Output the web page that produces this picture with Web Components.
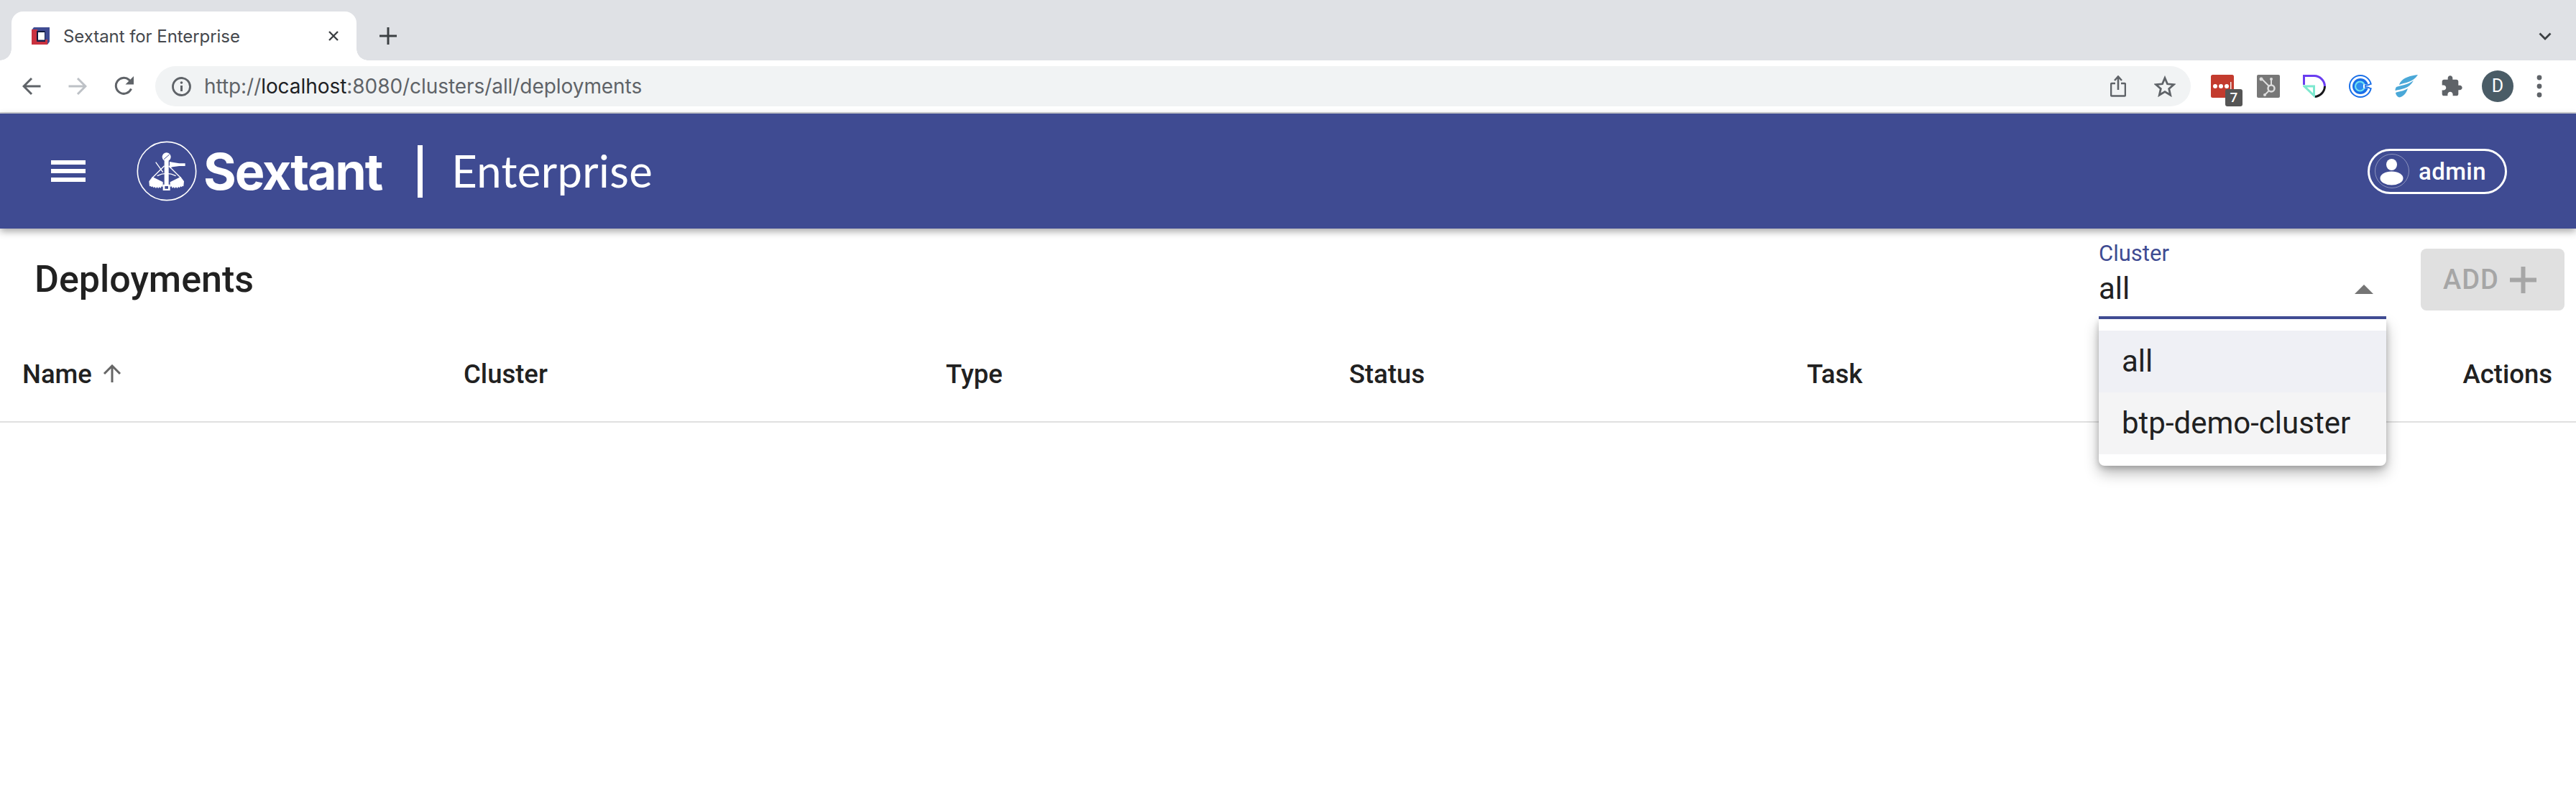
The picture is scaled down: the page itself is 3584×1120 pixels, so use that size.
<!DOCTYPE html>
<html lang="en">
<head>
<meta charset="utf-8">
<title>Sextant for Enterprise</title>
<style>
  html, body { margin: 0; padding: 0; background: #fff; }
  body { width: 3584px; height: 1120px; overflow: hidden; font-family: Roboto, "Liberation Sans", sans-serif; }
</style>
</head>
<body>
<browser-tabs></browser-tabs>
<browser-toolbar url-scheme="http://" url-host="localhost" url-rest=":8080/clusters/all/deployments"></browser-toolbar>
<app-header user="admin"></app-header>
<page-head title="Deployments"></page-head>
<deployments-table></deployments-table>

<script>
customElements.define('browser-tabs', class extends HTMLElement {
  constructor() {
    super();
    this.attachShadow({ mode: 'open' }).innerHTML = `
      <style>
        :host { display: flex; align-items: flex-end; height: 84px; background: #dfe1e5; padding-left: 16px; box-sizing: border-box; position: relative; }
        .tab { width: 480px; height: 68px; background: #fff; border-radius: 16px 16px 0 0; display: flex; align-items: center; box-sizing: border-box; padding-left: 28px; position: relative; }
        .tab::before, .tab::after { content: ""; position: absolute; bottom: 0; width: 16px; height: 16px; background: radial-gradient(circle at 0 0, #dfe1e5 15.5px, #fff 16px); }
        .tab::before { left: -16px; }
        .tab::after { right: -16px; background: radial-gradient(circle at 100% 0, #dfe1e5 15.5px, #fff 16px); }
        .title { margin-left: 19px; font: 400 24px Inter, Roboto, sans-serif; color: #45484d; white-space: nowrap; flex: 1; letter-spacing: -.06px; }
        .close { width: 16px; height: 16px; margin-right: 24px; }
        .plus { width: 24px; height: 24px; margin: 0 0 22px 32px; }
        .chevron { position: absolute; left: 3532px; top: 45px; width: 18px; height: 11px; }
      </style>
      <div class="tab">
        <svg width="25" height="26" viewBox="0 0 25 26">
          <path d="M3 1h22v20l-3 4H0V5z" fill="#3f4b92"/>
          <path d="M0 4h8v14h14v7H0z" fill="#c9313f"/>
          <path d="M7 6h12l-3 3H10v9l-3 3z" fill="#101a3c"/>
          <path d="M7 21l3-3h6V9l3-3v15z" fill="#141f4c"/>
          <rect x="9" y="8" width="9" height="10.500" fill="#fff"/>
        </svg>
        <span class="title">Sextant for Enterprise</span>
        <svg class="close" viewBox="0 0 16 16"><path d="M2 2l12 12M14 2L2 14" stroke="#3c4043" stroke-width="2.400" fill="none"/></svg>
      </div>
      <svg class="plus" viewBox="0 0 24 24"><path d="M12 0v24M0 12h24" stroke="#3c4043" stroke-width="3" fill="none"/></svg>
      <svg class="chevron" viewBox="0 0 18 11"><path d="M1.500 1.500L9 9l7.500-7.500" stroke="#3c4043" stroke-width="2.800" fill="none"/></svg>
    `;
  }
});

customElements.define('browser-toolbar', class extends HTMLElement {
  constructor() {
    super();
    this.attachShadow({ mode: 'open' }).innerHTML = `
      <style>
        :host { display: flex; align-items: center; height: 74px; box-sizing: border-box; border-bottom: 2px solid #d0d1d4; background: #fff; padding: 0 0 0 31px; position: relative; }
        svg { display: block; flex: none; }
        .nav { display: flex; gap: 38px; align-items: center; width: 185px; flex: none; }
        .omni { width: 2832px; height: 56px; background: #f1f3f4; border-radius: 28px; display: flex; align-items: center; box-sizing: border-box; padding: 0 21px 0 23px; flex: none; }
        .url { margin-left: 18px; font: 400 28px Inter, Roboto, sans-serif; letter-spacing: -.06px; color: #5f6368; flex: 1; white-space: nowrap; }
        .url b { font-weight: 400; color: #202124; }
        .omni-icons { display: flex; gap: 39px; align-items: center; }
        .ext { display: flex; align-items: center; margin-left: 28px; height: 72px; gap: 32px; }
        .ext > * { flex: none; }
        .lp { position: relative; width: 32px; height: 32px; }
        .badge { position: absolute; left: 20px; top: 20px; width: 24px; height: 24px; background: #555; border-radius: 3px; color: #fff; font: 500 19px/24px Roboto, sans-serif; text-align: center; }
        .avatar { width: 44px; height: 44px; border-radius: 50%; background: #4a5c66; color: #fff; font: 400 25px/44px Roboto, sans-serif; text-align: center; margin-left: 26px; flex: none; }
        .dots { margin-left: 32px; }
      </style>
      <div class="nav">
        <svg width="26" height="26" viewBox="0 0 26 26"><path d="M25.500 13H3M13 2L2 13l11 11" stroke="#5f6368" stroke-width="3" fill="none"/></svg>
        <svg width="26" height="26" viewBox="0 0 26 26"><path d="M.5 13H23M13 2l11 11-11 11" stroke="#bdc1c6" stroke-width="3" fill="none"/></svg>
        <svg width="28" height="28" viewBox="0 0 28 28"><path d="M23.500 17.500A11 11 0 1 1 20.500 5L24 8.500" stroke="#5f6368" stroke-width="3" fill="none"/><path d="M27 0v11.500H15.500z" fill="#5f6368"/></svg>
      </div>
      <div class="omni">
        <svg width="27" height="27" viewBox="0 0 27 27"><circle cx="13.500" cy="13.500" r="12" stroke="#5f6368" stroke-width="2.800" fill="none"/><path d="M13.500 12v8" stroke="#5f6368" stroke-width="3"/><circle cx="13.500" cy="8" r="1.800" fill="#5f6368"/></svg>
        <span class="url">${this.getAttribute('url-scheme')}<b>${this.getAttribute('url-host')}</b>${this.getAttribute('url-rest')}</span>
        <div class="omni-icons">
          <svg width="22" height="30" viewBox="0 0 22 30"><path d="M7 11H2.500a1.500 1.500 0 0 0-1.500 1.500V27a1.500 1.500 0 0 0 1.500 1.500h17A1.500 1.500 0 0 0 21 27V12.500A1.500 1.500 0 0 0 19.500 11H15M11 20V2M6 7l5-5.500L16 7" stroke="#5f6368" stroke-width="2.600" fill="none"/></svg>
          <svg width="30" height="30" viewBox="0 0 30 30"><path d="M15 3.500l3.500 8.300 9 .8-6.800 5.900 2 8.800-7.700-4.700-7.700 4.700 2-8.800-6.800-5.900 9-.8z" stroke="#5f6368" stroke-width="2.800" fill="none"/></svg>
        </div>
      </div>
      <div class="ext">
        <div class="lp">
          <svg width="32" height="32" viewBox="0 0 32 32"><rect width="32" height="32" rx="2.500" fill="#c33b2e"/><circle cx="6" cy="16" r="3" fill="#fff"/><circle cx="14" cy="16" r="3" fill="#fff"/><circle cx="22" cy="16" r="3" fill="#fff"/><rect x="27" y="10" width="1.500" height="12" fill="#eee"/></svg>
          <span class="badge">7</span>
        </div>
        <svg width="32" height="32" viewBox="0 0 32 32"><rect width="32" height="32" rx="2" fill="#777"/><g stroke="#ddd" fill="none" stroke-width="2"><circle cx="20" cy="19" r="4.500" stroke-width="2.500"/><path d="M7 6l10 10M20 7v7M16.500 22.500L11 28"/></g><circle cx="6" cy="6" r="2.500" fill="#ddd"/><circle cx="20" cy="6" r="2" fill="#ddd"/><circle cx="11" cy="28" r="2" fill="#ddd"/></svg>
        <svg width="32" height="32" viewBox="0 0 32 32"><path d="M1.500 14V1.500H15A15 15 0 0 1 30.500 16" stroke="#6a3df0" stroke-width="3" fill="none"/><path d="M30.500 16A15 15 0 0 1 16 30.500" stroke="#17171a" stroke-width="3" fill="none"/><path d="M2 16h13.500v13z" stroke="#7de8cf" stroke-width="3" fill="none"/></svg>
        <svg width="32" height="32" viewBox="0 0 32 32"><circle cx="16" cy="16" r="15" fill="none" stroke="#1a6fe8" stroke-width="2"/><circle cx="16" cy="16" r="11" fill="#1a6fe8"/><circle cx="15.500" cy="16" r="6.500" fill="#2d8df0" stroke="#6fe3f2" stroke-width="2.200"/><path d="M20 16h13" stroke="#fff" stroke-width="5"/><path d="M22 15c3 0 6-.5 9-2.500M22 17c3 0 6 .5 9 2.500" stroke="#1a6fe8" stroke-width="2" fill="none"/></svg>
        <svg width="32" height="32" viewBox="0 0 32 32"><g fill="#4aa8d8"><path d="M32 0C22 1 12 4 8 10c-1 1.500-2 3-2 4 7-3 19-3 26-14z"/><path d="M26 8C18 14 8 15 2 17c-1 1.500-1.500 3-1.500 5 8-2 19-2 25.500-14z"/><path d="M18 19C12 23 6 23 1 25c.5 3 2 5.500 5 6.500 6-1 10-6 12-12.500z"/></g></svg>
        <svg width="32" height="32" viewBox="0 0 24 24" style="margin-left:-1px"><path fill="#5f6368" d="M20.500 11H19V7c0-1.100-.9-2-2-2h-4V3.500C13 2.120 11.880 1 10.500 1S8 2.120 8 3.500V5H4c-1.100 0-1.990.9-1.990 2v3.800H3.500c1.490 0 2.700 1.210 2.700 2.700s-1.210 2.700-2.700 2.700H2V20c0 1.100.9 2 2 2h3.800v-1.500c0-1.490 1.210-2.700 2.700-2.700 1.490 0 2.700 1.210 2.700 2.700V22H17c1.100 0 2-.9 2-2v-4h1.500c1.380 0 2.500-1.120 2.500-2.500S21.880 11 20.500 11z"/></svg>
      </div>
      <span class="avatar">D</span>
      <svg class="dots" width="8" height="32" viewBox="0 0 8 32"><circle cx="4" cy="4" r="3.400" fill="#5f6368"/><circle cx="4" cy="16" r="3.400" fill="#5f6368"/><circle cx="4" cy="28" r="3.400" fill="#5f6368"/></svg>
    `;
  }
});

customElements.define('sextant-logo', class extends HTMLElement {
  constructor() {
    super();
    this.attachShadow({ mode: 'open' }).innerHTML = `
      <style>
        :host { display: flex; align-items: center; color: #fff; }
        svg { display: block; flex: none; }
        .word { font: 700 70px/1 Inter, Roboto, sans-serif; margin: 2px 0 0 9px; letter-spacing: -2.200px; }
        .sep { width: 7px; height: 73px; background: #fff; margin: 0 40px 0 50px; }
        .edition { font: 400 61.500px/1 Lato, Roboto, sans-serif; letter-spacing: .4px; }
      </style>
      <svg width="84" height="84" viewBox="60 76 252 252">
        <circle cx="186" cy="202" r="122" fill="none" stroke="#fff" stroke-width="5"/>
        <g fill="#fff">
          <circle cx="185" cy="143" r="18"/>
          <rect x="176" y="150" width="18" height="112"/>
          <path d="M170 258h30v25h-30zM178 265v11h14v-11z" fill-rule="evenodd"/>
          <path d="M198 163l12 2 28 5h25v11h-25l-28 4-12 4z"/>
          <path d="M112 245l14-19 44 22v20l-6-2-3 7-6-4-4 5-6-5-4 5-6-6-4 4-5-6-4 3-4-5-4 2z"/>
          <path d="M258 245l-14-19-44 22v20l6-2 3 7 6-4 4 5 6-5 4 5 6-6 4 4 5-6 4 3 4-5 4 2z"/>
        </g>
        <g fill="none" stroke="#fff" stroke-width="4">
          <path d="M140 165l30 42M176 180l-50 50M194 180l50 50"/>
          <path d="M146 222q39-20 78 0"/>
        </g>
        <path d="M174 153l23-20" stroke="#3f4b92" stroke-width="3"/>
      </svg>
      <span class="word">Sextant</span>
      <span class="sep"></span>
      <span class="edition">Enterprise</span>
    `;
  }
});

customElements.define('user-chip', class extends HTMLElement {
  constructor() {
    super();
    this.attachShadow({ mode: 'open' }).innerHTML = `
      <style>
        :host { display: flex; align-items: center; width: 194px; height: 63px; box-sizing: border-box; border: 3px solid #fff; border-radius: 32px; padding-left: 7px; color: #fff; }
        svg { display: block; flex: none; }
        .name { font: 500 33px Roboto, sans-serif; letter-spacing: .4px; margin-left: 13px; }
      </style>
      <svg width="48" height="48" viewBox="0 0 48 48">
        <circle cx="24" cy="24" r="23.500" fill="none" stroke="#fff" stroke-opacity=".4" stroke-width="1"/>
        <ellipse cx="23.500" cy="15" rx="7.500" ry="8" fill="#fff"/>
        <ellipse cx="23.500" cy="34" rx="16" ry="9.500" fill="#fff"/>
      </svg>
      <span class="name"><slot></slot></span>
    `;
  }
});

customElements.define('app-header', class extends HTMLElement {
  constructor() {
    super();
    this.attachShadow({ mode: 'open' }).innerHTML = `
      <style>
        :host { display: flex; align-items: center; height: 160px; background: #3f4b92; padding: 0 96px 0 71px; box-shadow: 0 4px 10px rgba(0,0,0,.35); position: relative; z-index: 2; }
        .menu { width: 48px; height: 30px; flex: none; display: flex; flex-direction: column; justify-content: space-between; margin-right: 71px; }
        .menu i { display: block; height: 6px; background: #fff; }
        sextant-logo { flex: 1; }
      </style>
      <div class="menu"><i></i><i></i><i></i></div>
      <sextant-logo></sextant-logo>
      <user-chip>${this.getAttribute('user')}</user-chip>
    `;
  }
});

customElements.define('cluster-select', class extends HTMLElement {
  constructor() {
    super();
    this.attachShadow({ mode: 'open' }).innerHTML = `
      <style>
        :host { display: block; width: 400px; position: relative; color: #212121; }
        .label { font: 400 31px/34px Roboto, sans-serif; color: #3f4b92; height: 34px; margin-top: -2px; }
        .value { height: 81px; box-sizing: border-box; border-bottom: 4px solid #3f4b92; font: 400 42px/54px Roboto, sans-serif; display: flex; justify-content: space-between; align-items: center; padding: 0 18px 0 0; margin-top: -7px; position: relative; z-index: 1; }
        .value i { width: 0; height: 0; border: 13px solid transparent; border-top: 0; border-bottom: 13px solid #757575; margin-top: 2px; }
        .menu { position: absolute; left: 0; right: 0; top: 106px; box-sizing: border-box; padding: 16px 0; background: #fff; border-radius: 0 0 8px 8px; box-shadow: 0 10px 20px rgba(0,0,0,.28), 0 3px 8px rgba(0,0,0,.2); z-index: 0; }
        .item { height: 86px; padding-left: 32px; font: 400 42px/86px Roboto, sans-serif; }
        .item.selected { background: #eff0f5; }
        .item.hover { background: #f4f4f5; }
      </style>
      <div class="label">Cluster</div>
      <div class="value"><span>all</span><i></i></div>
      <div class="menu">
        <div class="item selected">all</div>
        <div class="item hover">btp-demo-cluster</div>
      </div>
    `;
  }
});

customElements.define('add-button', class extends HTMLElement {
  constructor() {
    super();
    this.attachShadow({ mode: 'open' }).innerHTML = `
      <style>
        :host { display: flex; align-items: center; gap: 15px; width: 200px; height: 86px; box-sizing: border-box; padding-left: 31px; background: #e0e0e0; border-radius: 8px; color: #a6a6a6; font: 500 38px Roboto, sans-serif; letter-spacing: 1px; }
        svg { display: block; }
      </style>
      <span><slot></slot></span>
      <svg width="37" height="37" viewBox="0 0 37 37"><path d="M18.500 0v37M0 18.500h37" stroke="#a6a6a6" stroke-width="6" fill="none"/></svg>
    `;
  }
});

customElements.define('page-head', class extends HTMLElement {
  constructor() {
    super();
    this.attachShadow({ mode: 'open' }).innerHTML = `
      <style>
        :host { display: flex; height: 118px; box-sizing: border-box; padding: 26px 16px 0 48px; position: relative; z-index: 3; margin-top: -6px; }
        h1 { margin: 0; flex: 1; font: 500 52px/66px Roboto, sans-serif; color: #212121; padding-top: 18px; }
        add-button { margin: 8px 0 0 48px; }
      </style>
      <h1>${this.getAttribute('title')}</h1>
      <cluster-select></cluster-select>
      <add-button>ADD</add-button>
    `;
  }
});

customElements.define('deployments-table', class extends HTMLElement {
  constructor() {
    super();
    this.attachShadow({ mode: 'open' }).innerHTML = `
      <style>
        :host { display: grid; grid-template-columns: 614px 671px 561px 637px 1fr auto; align-items: center; height: 158px; box-sizing: border-box; padding: 24px 33px 0 31px; border-bottom: 2px solid #e0e0e0; font: 500 36.500px Roboto, sans-serif; color: #212121; }
        span { display: flex; align-items: center; gap: 15px; }
        svg { display: block; }
      </style>
      <span>Name <svg width="26" height="26" viewBox="0 0 26 26"><path d="M13 25V2M2 13L13 2l11 11" stroke="#666" stroke-width="3" fill="none"/></svg></span>
      <span>Cluster</span>
      <span>Type</span>
      <span>Status</span>
      <span>Task</span>
      <span>Actions</span>
    `;
  }
});
</script>
</body>
</html>
